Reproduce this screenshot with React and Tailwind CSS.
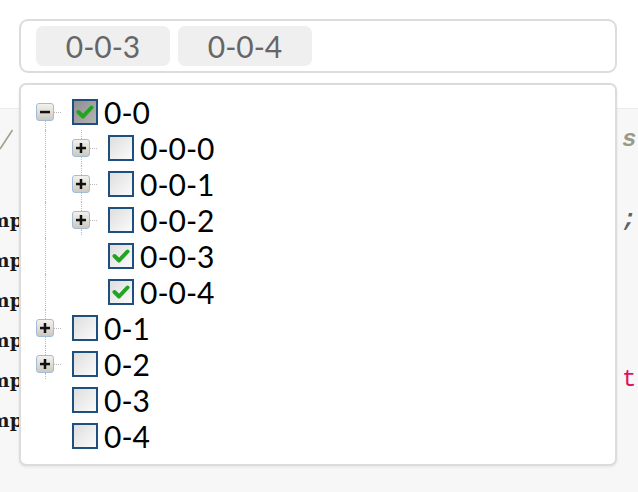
import React from "react";

const FONT = { fontFamily: "Lato, 'Noto Sans', sans-serif" };

const tree = [
  { key: "0-0", sw: "minus", checked: true, dark: true, guides: [], line: [false, true] },
  { key: "0-0-0", sw: "plus", checked: false, guides: [true], line: [true, true] },
  { key: "0-0-1", sw: "plus", checked: false, guides: [true], line: [true, true] },
  { key: "0-0-2", sw: "plus", checked: false, guides: [true], line: [true, "short"] },
  { key: "0-0-3", sw: null, checked: true, guides: [true], line: [false, false] },
  { key: "0-0-4", sw: null, checked: true, guides: [true], line: [false, false] },
  { key: "0-1", sw: "plus", checked: false, guides: [], line: [true, true] },
  { key: "0-2", sw: "plus", checked: false, guides: [], line: [true, "short"] },
  { key: "0-3", sw: null, checked: false, guides: [], line: [false, false] },
  { key: "0-4", sw: null, checked: false, guides: [], line: [false, false] },
];

function Switcher({ type }) {
  return (
    <div className="w-[18px] h-[18px] rounded-[3px] border-[1.5px] border-[#a3bdd8] bg-gradient-to-b from-[#f4f2ee] to-[#cdc9c1] flex items-center justify-center">
      <svg width="10" height="10" viewBox="0 0 10 10">
        <rect x="0" y="3.8" width="10" height="2.5" fill="#111" />
        {type === "plus" && <rect x="3.75" y="0" width="2.5" height="10" fill="#111" />}
      </svg>
    </div>
  );
}

function Checkbox({ checked, dark }) {
  return (
    <div
      className={`w-[26px] h-[26px] border-2 border-[#1f4f7f] flex items-center justify-center ${
        dark
          ? "bg-gradient-to-br from-[#8f8f8f] to-[#b4b4b4]"
          : "bg-gradient-to-br from-[#dedede] to-[#fbfbfb]"
      }`}
    >
      {checked && (
        <svg width="18" height="16" viewBox="0 0 18 16">
          <path d="M2.5 8 L7 12.5 L15.5 3.5" fill="none" stroke="#22a322" strokeWidth="4" strokeLinecap="round" strokeLinejoin="round" />
        </svg>
      )}
    </div>
  );
}

function Column({ line, sw }) {
  // one 36px wide column: vertical guide centred under the switcher, stub to the checkbox
  const [top, bottom] = line;
  return (
    <div className="w-[36px] h-full flex">
      <div className="w-[18px] h-full flex flex-col items-center">
        <div className={`flex-1 w-0 ${top ? "border-l border-dotted border-[#b9b9b9]" : ""}`} />
        {sw ? <Switcher type={sw} /> : <div className="h-[18px]" />}
        <div className="flex-1 w-full flex flex-col items-center">
          <div className={`w-0 ${bottom === true ? "flex-1" : bottom === "short" ? "h-[6px]" : "h-0"} ${bottom ? "border-l border-dotted border-[#b9b9b9]" : ""}`} />
        </div>
      </div>
      <div className="flex-1 flex items-center">
        {sw && <div className="w-[7px] border-t border-dotted border-[#b9b9b9]" />}
      </div>
    </div>
  );
}

function Guide({ on }) {
  return (
    <div className="w-[36px] h-full">
      <div className="w-[18px] h-full flex justify-center">
        <div className={`w-0 h-full ${on ? "border-l border-dotted border-[#b9b9b9]" : ""}`} />
      </div>
    </div>
  );
}

function Row({ node }) {
  return (
    <div className="h-[36px] flex items-center pl-[15px]">
      {node.guides.map((g, i) => (
        <Guide key={i} on={g} />
      ))}
      <Column line={node.line} sw={node.sw} />
      <Checkbox checked={node.checked} dark={node.dark} />
      <span className="ml-[6px] text-[30px] leading-none text-black">{node.key}</span>
    </div>
  );
}

export default function App() {
  const codeLines = [
    { l: "/", slash: true, r: "s", rc: "text-[#999988] italic font-bold" },
    { l: "", r: "" },
    { l: "imp", r: ";", rc: "text-[#5a6566] font-bold italic" },
    { l: "imp", r: "" },
    { l: "imp", r: "" },
    { l: "imp", r: "" },
    { l: "imp", r: "t", rc: "text-[#e0115f]" },
    { l: "imp", r: "" },
  ];

  return (
    <div className="relative w-[638px] h-[492px] overflow-hidden bg-white" style={FONT}>
      {/* code block behind the select */}
      <div className="mt-[108px] h-[384px] bg-[#f7f7f7] border-t border-[#ebebeb] pt-[11px] flex justify-between">
        <div className="w-[19px] overflow-hidden">
          {codeLines.map((c, i) =>
            c.slash ? (
              <div key={i} className="h-[40px] flex items-center">
                <svg width="14" height="22" viewBox="0 0 14 22">
                  <line x1="0" y1="20" x2="12.5" y2="1" stroke="#a0a08e" strokeWidth="1.6" />
                </svg>
              </div>
            ) : (
              <div
                key={i}
                className="h-[40px] flex items-center justify-end whitespace-nowrap text-[19px] font-bold text-[#1a1a1a]"
                style={{ fontFamily: "'DejaVu Serif', serif" }}
              >
                <span className="mr-[-4px]">{c.l}</span>
              </div>
            )
          )}
        </div>
        <div className="w-[16px] overflow-hidden">
          {codeLines.map((c, i) => (
            <div
              key={i}
              className={`h-[40px] flex items-center whitespace-nowrap text-[24px] ${c.rc || ""}`}
              style={{ fontFamily: "'Liberation Mono', monospace" }}
            >
              {c.r}
            </div>
          ))}
        </div>
      </div>

      {/* select + dropdown overlay */}
      <div className="absolute left-[19px] top-[19px] w-[598px]">
        <div className="h-[54px] border-2 border-[#dcdcdc] rounded-[9px] bg-white flex items-center gap-[8px] pl-[15px]">
          <span className="h-[40px] w-[134px] rounded-[7px] bg-[#efefef] flex items-center justify-center text-[30px] text-[#666]">0-0-3</span>
          <span className="h-[40px] w-[134px] rounded-[7px] bg-[#efefef] flex items-center justify-center text-[30px] text-[#666]">0-0-4</span>
        </div>
        <div className="mt-[10px] h-[383px] border-2 border-[#dcdcdc] rounded-[7px] bg-white pt-[9px] shadow-[0_1px_3px_rgba(0,0,0,0.08)]">
          {tree.map((n) => (
            <Row key={n.key} node={n} />
          ))}
        </div>
      </div>
    </div>
  );
}
